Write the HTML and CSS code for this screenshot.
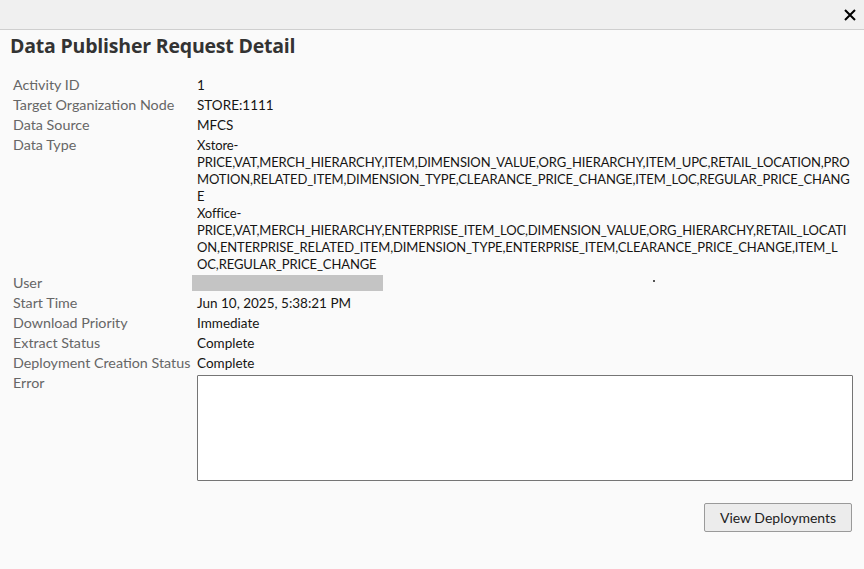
FILE: index.html
```html
<!DOCTYPE html>
<html>
<head>
<meta charset="utf-8">
<link rel="stylesheet" href="styles.css">
</head>
<body>
<div class="dialog">
  <div class="titlebar">
    <button class="close" aria-label="Close">
      <svg width="12" height="12" viewBox="0 0 12 12"><path d="M1 1 L11 11 M11 1 L1 11" stroke="#000" stroke-width="2" fill="none"/></svg>
    </button>
  </div>
  <h1 class="title">Data Publisher Request Detail</h1>
  <div class="details">
    <div class="label">Activity ID</div><div class="value">1</div>
    <div class="label">Target Organization Node</div><div class="value">STORE:1111</div>
    <div class="label">Data Source</div><div class="value">MFCS</div>
    <div class="label">Data Type</div>
    <div class="value multi">
      <div class="ln">Xstore-</div>
      <div class="ln">PRICE,VAT,MERCH_HIERARCHY,ITEM,DIMENSION_VALUE,ORG_HIERARCHY,ITEM_UPC,RETAIL_LOCATION,PRO</div>
      <div class="ln">MOTION,RELATED_ITEM,DIMENSION_TYPE,CLEARANCE_PRICE_CHANGE,ITEM_LOC,REGULAR_PRICE_CHANG</div>
      <div class="ln">E</div>
      <div class="ln">Xoffice-</div>
      <div class="ln">PRICE,VAT,MERCH_HIERARCHY,ENTERPRISE_ITEM_LOC,DIMENSION_VALUE,ORG_HIERARCHY,RETAIL_LOCATI</div>
      <div class="ln">ON,ENTERPRISE_RELATED_ITEM,DIMENSION_TYPE,ENTERPRISE_ITEM,CLEARANCE_PRICE_CHANGE,ITEM_L</div>
      <div class="ln">OC,REGULAR_PRICE_CHANGE</div>
    </div>
    <div class="label">User</div><div class="value user"><span class="redacted"></span><span class="dot"></span></div>
    <div class="label">Start Time</div><div class="value">Jun 10, 2025, 5:38:21 PM</div>
    <div class="label">Download Priority</div><div class="value">Immediate</div>
    <div class="label">Extract Status</div><div class="value">Complete</div>
    <div class="label">Deployment Creation Status</div><div class="value">Complete</div>
    <div class="label">Error</div><div class="value"><textarea class="error" readonly></textarea></div>
  </div>
  <div class="actions">
    <button class="btn">View Deployments</button>
  </div>
</div>
</body>
</html>
```
FILE: styles.css
```css
html, body {
  margin: 0;
  padding: 0;
  background: #fafafa;
}
body {
  font-family: Lato, "Noto Sans", sans-serif;
  color: #161513;
  width: 864px;
  height: 569px;
  overflow: hidden;
}
.titlebar {
  height: 29px;
  background: #f0f0f0;
  border-bottom: 1px solid #cfcfcf;
  display: flex;
  justify-content: flex-end;
  align-items: center;
}
.close {
  border: 0;
  background: none;
  padding: 0;
  margin-right: 8px;
  margin-top: 1px;
  width: 12px;
  height: 12px;
  display: flex;
}
.title {
  margin: 0;
  padding: 2px 0 0 10px;
  font-family: "Open Sans", sans-serif;
  font-size: 19.5px;
  font-weight: 700;
  color: #333;
  line-height: 28px;
  letter-spacing: -0.2px;
}
.details {
  display: grid;
  grid-template-columns: 184px 656px;
  padding: 15px 0 0 13px;
  font-size: 14.3px;
  line-height: 20px;
}
.label {
  color: #666;
  white-space: nowrap;
}
.value {
  color: #161513;
  font-size: 13.5px;
}
.multi {
  line-height: 17px;
  padding-top: 2px;
}
.ln {
  white-space: nowrap;
  font-size: 13px;
  letter-spacing: -0.12px;
}
.user {
  display: flex;
  align-items: center;
}
.redacted {
  display: block;
  width: 191px;
  height: 16px;
  background: #c4c4c4;
  margin-left: -5px;
}
.dot {
  display: block;
  width: 2px;
  height: 2px;
  background: #555;
  margin-left: 270px;
  margin-top: -5px;
}
.error {
  display: block;
  box-sizing: border-box;
  width: 656px;
  height: 106px;
  margin-top: 2px;
  border: 1px solid #757575;
  border-radius: 1px;
  background: #fff;
  resize: none;
  padding: 4px;
}
.actions {
  display: flex;
  justify-content: flex-end;
  padding: 22px 12px 0 0;
}
.btn {
  width: 148px;
  height: 29px;
  background: #ececec;
  border: 1px solid #9a9a9a;
  border-radius: 2px;
  font-family: Lato, "Noto Sans", sans-serif;
  font-size: 14px;
  color: #222;
  padding: 0;
}
```
